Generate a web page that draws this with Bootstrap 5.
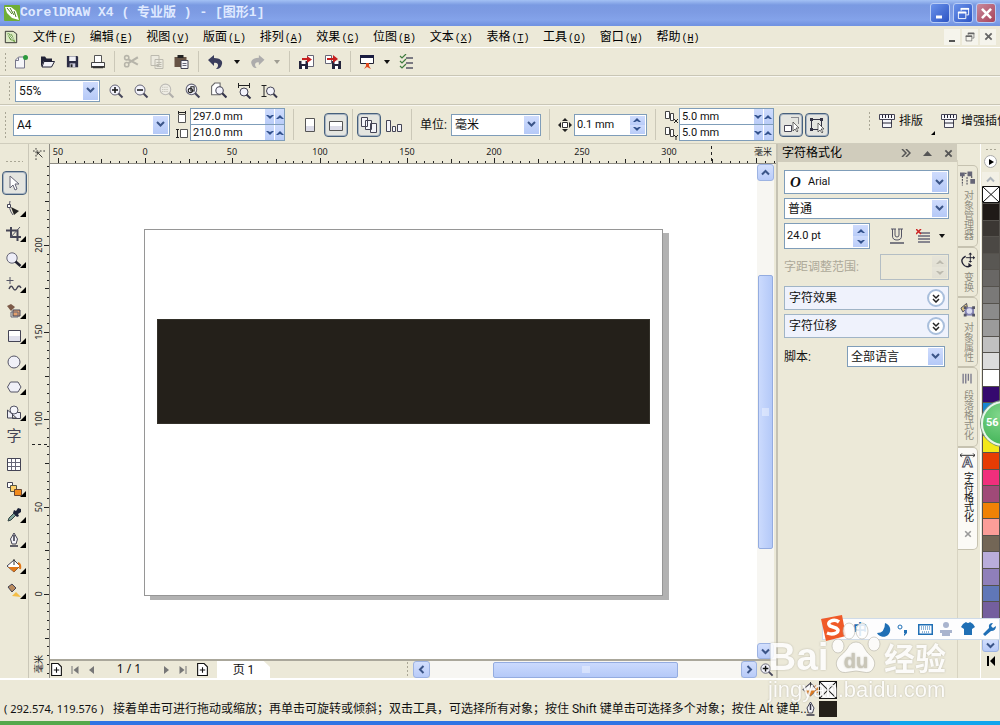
<!DOCTYPE html>
<html lang="zh-CN">
<head>
<meta charset="utf-8">
<meta name="viewport" content="width=device-width, initial-scale=1">
<title>CorelDRAW X4</title>
<link href="https://cdn.jsdelivr.net/npm/bootstrap@5.3.0/dist/css/bootstrap.min.css" rel="stylesheet">
<style>
:root{--face:#ece9d8;--edge:#7f9db9;--blue:#c4d4fb;--ink:#222}
body{font:12px/16px Roboto,"Noto Sans CJK SC",sans-serif;background:var(--face);color:#111;overflow:hidden}
button,input,select{font:inherit;color:inherit}
svg{display:block;flex:none}
.plain-btn{background:none;border:0;padding:0;display:flex;align-items:center;justify-content:center;flex:none}
.titlebar{height:26px;background:linear-gradient(#a3c1f4 0,#7a9ae2 5px,#7d9be3 12px,#84a3ea 20px,#7193e2 25px);color:#dfe9ff}
.titlebar h1{font:bold 13px/26px "Liberation Mono","Noto Sans CJK SC",monospace;white-space:pre}
.win-btn{width:20px;height:20px;border:1px solid #b9cdf5;border-radius:3px;background:linear-gradient(135deg,#6a92ea,#2c54c4)}
.win-btn.quit{background:linear-gradient(135deg,#c98a9c,#a8435a)}
.menubar{height:22px;border-bottom:1px solid #fff}
.menu-list{width:688px}
.menu-list li{flex:1 1 0;padding-left:7px}
.menu-list a{color:#000;text-decoration:none;white-space:nowrap}
.menu-list kbd{font:10px "Liberation Mono",monospace;background:none;color:#000;padding:0 0 0 1px}
.mdi-btn{width:16px;height:16px;background:#f5f4ec}
.bar-std{height:28px;border-bottom:1px solid #c9c6b6;gap:8px}
.bar-std .file-set{gap:10px;margin-left:-2px}
.bar-zoom{height:29px;border-bottom:1px solid #c9c6b6;border-top:1px solid #f8f7f0}
.zoom-set{gap:9px}
.bar-prop{height:38px;border-top:1px solid #f8f7f0}
.grip{width:3px;height:20px;background:radial-gradient(circle,#a9a695 1px,transparent 1px) 0 0/3px 4px;flex:none}
.grip.tall{height:28px}
.grip.flat{width:18px;height:3px;background-size:4px 3px}
.rule-v{width:1px;align-self:stretch;margin:3px 0;background:#cbc8b8;flex:none}
.combo{appearance:none;border:1px solid var(--edge);border-radius:0;height:22px;padding:0 18px 0 3px;line-height:18px;
 background:url("data:image/svg+xml,%3Csvg xmlns='http://www.w3.org/2000/svg' width='9' height='7'%3E%3Cpath d='M1 1l3.500 3.500L8 1' fill='none' stroke='%233b5588' stroke-width='2'/%3E%3C/svg%3E") right 4px center no-repeat,
 linear-gradient(#cfdcfd,#b5c9f7) right 1px center/15px calc(100% - 2px) no-repeat,#fff}
.field{border:1px solid var(--edge);background:#fff;display:flex;align-items:stretch}
.field input{border:0;background:none;padding:0 0 0 2px;min-width:0;width:100%;outline:0;font-size:11px}
.field button{border:0;padding:0;background:linear-gradient(#cfdcfd,#b9ccf8);display:flex;align-items:center;justify-content:center}
.pair .field{height:17px;width:95px}
.pair label+label .field{margin-top:-1px}
.pair .field button{width:10px;border-left:1px solid #fff;flex:none}
.size-set label{gap:2px}
.steps{width:15px;margin:1px;flex:none;display:flex;flex-direction:column}
.steps button{flex:1}
.toggled{border:1px solid #47607c;border-radius:4px;background:#e4e5e0;box-shadow:0 0 0 1px #a9b5c2 inset}
.sq{width:24px;height:24px}
.dd::after{content:"";border:3px solid transparent;border-top:4px solid #111;border-bottom:0}
.dd{width:8px}
.dim{opacity:.35}
.toolbox{width:29px;border-right:1px solid #cac7b8}
.tool-stack{height:432px}
.tool-stack button{width:25px;height:24px}
.tool-glyph{font-size:15px;line-height:15px;color:#445;padding-bottom:4px}
.fly::after{content:"";position:absolute;right:1px;bottom:4px;border:3px solid transparent;border-right-color:#000;border-bottom-color:#000}
.rulers-v{width:21px;border-right:1px solid #8e8c84}
.ruler-h{height:20px;border-bottom:1px solid #8e8c84}
.ruler-corner{height:20px}
.ruler-text{font:9px "Noto Sans","Noto Sans CJK SC",sans-serif;fill:#222}
.canvas{background:#fff}
.paper{width:519px;height:367px;margin:65px 0 0 94px;border:1px solid #969696;box-shadow:6px 4px 0 0 #b2b2b2;padding:89px 12px 0}
.paper>div{height:105px;background:#24201a;border:1px solid #333029}
.scroll-v{width:17px;margin-right:2px;background:#f7f6f2}
.scroll-btn{background:linear-gradient(#d3dffd,#b8cbf8);border:1px solid #9db3e2;border-radius:3px}
.thumb-v{height:274px;margin:94px 1px 0;background:linear-gradient(90deg,#cbdafd,#b4c9f8);border:1px solid #94ace0;border-radius:2px}
.thumb-h{width:185px;height:16px;background:linear-gradient(#cbdafd,#b4c9f8);border:1px solid #94ace0;border-radius:2px}
.pagebar{height:19px;border-top:2px solid #aaa79b}
.page-count{width:60px;font-family:"Noto Sans",sans-serif}
.page-tab{width:53px;background:#fff;clip-path:polygon(0 0,88% 0,100% 35%,100% 100%,0 100%)}
.docker{width:181px;border-left:2px solid #c5c2b3}
.docker-head{height:18px;background:#d0ccbc}
.docker-body{padding:8px 8px 0 6px}
.roll{height:24px;border:1px solid #a0b4c6;background:#eff2fc;padding:0 3px 0 4px}
.roll i{width:18px;height:18px;border:2px solid #a9bfdc;border-radius:50%;background:#fff;display:flex;align-items:center;justify-content:center}
.font-mark{left:6px;top:4px;font:italic bold 15px/16px "Liberation Serif",serif}
.tab-col{width:23px;border-left:1px solid #d8d4c2;padding-top:5px}
.side-tab{width:20px;border:1px solid #c6c2b0;border-left:0;border-radius:0 5px 5px 0;color:#8f8c7f;font-size:11px;line-height:14px;padding:4px 0;background:none;display:flex;flex-direction:column;align-items:center;gap:4px}
.side-tab span{writing-mode:vertical-rl;white-space:nowrap;font-size:10px}
.side-tab.active{background:#fbfaf6;color:#111}
.palette{width:20px;border-left:1px solid #fff;padding:4px 1px 0}
.swatches{height:432px;width:18px}
.swatches span{flex:1 1 0;border:1px solid #55524d;border-bottom-width:0}
.status{height:43px;border-top:2px solid #fff}
.coords{width:113px;font:11px/16px "Noto Sans",sans-serif}
.hint{width:689px}
.taskbar{height:4px;background:linear-gradient(90deg,#55a84c 0 9%,#2f74e4 9% 89%,#12a5ee 89%)}
.clip{position:absolute;inset:0;overflow:hidden;pointer-events:none}
.ball{position:absolute;right:-26px;top:401px;width:45px;height:45px;border-radius:50%;border:2px solid #e8f6ea;background:radial-gradient(circle at 40% 30%,#7fd68a,#35ac4d);color:#fff;font-weight:700;font-size:11px;line-height:40px;padding-left:3px;box-shadow:0 0 0 1px #7b9a80}
.ime{position:absolute;right:0;top:618px;width:178px;height:22px;background:#fdfdfe;border:1px solid #cfdbe8;padding-left:29px}
.sogou{position:absolute;left:-4px;top:-5px}
.wm{position:absolute;right:54px;top:634px;width:178px;color:#fff;opacity:.85;text-shadow:0 0 2px #aaa79a}
.wm-name{font:bold 39px/46px "Liberation Sans",sans-serif}
.wm-cn{font:bold 31px/46px "Noto Sans CJK SC",sans-serif}
.wm-url{font:22px/20px "Liberation Sans",sans-serif}
</style>
</head>
<body class="vh-100 d-flex flex-column position-relative">

<svg width="0" height="0" class="position-absolute" aria-hidden="true">
 <defs>
 <symbol id="logo" viewBox="0 0 16 16"><rect width="16" height="16" rx="1" fill="#6fae35"/><path d="M1 2l6 0 5 4 3 9-7-2-5-5z" fill="#fff"/><path d="M3 3l5 6M6 3l4 7M10 6l2 6" stroke="#4c7f22" fill="none"/></symbol>
 <symbol id="doc" viewBox="0 0 16 16"><path d="M1.500 1.500h9l4 3v10h-13z" fill="#dce9c4" stroke="#222"/><path d="M3 3l6 2 4 9-6-3z" fill="#5d9431"/><path d="M4 4l6 8M7 5l4 6" stroke="#fff"/></symbol>
 <symbol id="new" viewBox="0 0 16 16"><path d="M2.500 6l3-3h6v11h-9z" fill="#f5f5f8" stroke="#77778a"/><path d="M2.500 6.500h3v-3" fill="none" stroke="#77778a"/><circle cx="12.500" cy="3.500" r="2.500" fill="#2d9a3c"/></symbol>
 <symbol id="open" viewBox="0 0 16 16"><path d="M2 13V2.500h4l1.500 2H13V7H5z" fill="#222336"/><path d="M5 7.500h10.500l-3 5.500H3z" fill="#f3f3f8" stroke="#222336"/></symbol>
 <symbol id="save" viewBox="0 0 16 16"><path d="M2 2h11l1 1v11H2z" fill="#2b2c44"/><path d="M4.500 2.500h7v5h-7z" fill="#f1f1f6"/><path d="M5 10h6v4H5z" fill="#ccd"/><path d="M6 11h2v3H6z" fill="#222"/></symbol>
 <symbol id="print" viewBox="0 0 16 16"><path d="M4.500 8V1.500h7V8" fill="#fff" stroke="#555"/><path d="M1.500 8.500h13v4h-13z" fill="#fafafc" stroke="#444"/><path d="M3 13.500h10M1 13h14" stroke="#333" stroke-width="1.500"/></symbol>
 <symbol id="cut" viewBox="0 0 16 16"><path d="M14 4L5 9.500M14 11L5 6" stroke="#555" stroke-width="2"/><circle cx="3.500" cy="4.500" r="2" fill="none" stroke="#555" stroke-width="1.500"/><circle cx="3.500" cy="11" r="2" fill="none" stroke="#555" stroke-width="1.500"/></symbol>
 <symbol id="copy" viewBox="0 0 16 16"><path d="M2.500 1.500h8v10h-8zM6.500 5.500h8v9h-8z" fill="#eee" stroke="#666"/><path d="M8 8.500h5M8 10.500h5M8 12.500h5" stroke="#666"/></symbol>
 <symbol id="paste" viewBox="0 0 16 16"><path d="M1 3h12v10H1z" fill="#665344"/><path d="M4 1h6v3H4z" fill="#222"/><path d="M7.500 6.500h7v8h-7z" fill="#f5f5fa" stroke="#445"/><path d="M9 9.500h4M9 11.500h4" stroke="#667"/></symbol>
 <symbol id="undo" viewBox="0 0 16 16"><path d="M0 6l6-5v3c6 0 9 3 8 6-1 4-3 5-6 5 3-2 3-7-2-6v3z" fill="#3a3d5c"/></symbol>
 <symbol id="import" viewBox="0 0 18 16"><path d="M9.500 1.500h6v11h-6z" fill="#fff" stroke="#667"/><path d="M1 7h9v8H1z" fill="#24253c"/><path d="M3.500 7h4v3h-4zM4 12h3v3H4z" fill="#fff"/><path d="M4 4h5V2l5 3.500-5 3.500V6H4z" fill="#c61f1f"/></symbol>
 <symbol id="export" viewBox="0 0 18 16"><path d="M1.500 1.500h6v8h-6z" fill="#fff" stroke="#667"/><path d="M8 7h9v8H8z" fill="#24253c"/><path d="M10.500 7h4v3h-4zM11 12h3v3h-3z" fill="#fff"/><path d="M3 4h6V1l5 4-5 4V6H3z" fill="#c61f1f"/></symbol>
 <symbol id="launch" viewBox="0 0 16 16"><path d="M1.500 1.500h13v8h-13z" fill="#fff" stroke="#223"/><path d="M1 1h14v3H1z" fill="#1b1d40"/><path d="M7 9h3v3l2 3-4-2-3 2 2-3z" fill="#e0481d"/></symbol>
 <symbol id="checks" viewBox="0 0 16 16"><path d="M7 4h7M7 9h7M7 14h7" stroke="#556" stroke-width="1.500"/><path d="M1 2l2 2 4-4M1 7l2 2 4-4M1 12l2 2 4-4" fill="none" stroke="#3f7c3f" stroke-width="1.200"/></symbol>
 <symbol id="lens" viewBox="0 0 16 16"><circle cx="7" cy="7" r="5" fill="#f3f3fb" stroke="#666678"/><path d="M10.500 10.500l4 4" stroke="#45455a" stroke-width="2"/></symbol>
 <symbol id="zin" viewBox="0 0 16 16"><use href="#lens"/><path d="M4 7h6M7 4v6" stroke="#111" stroke-width="1.500"/></symbol>
 <symbol id="zout" viewBox="0 0 16 16"><use href="#lens"/><path d="M4 7h6" stroke="#111" stroke-width="1.500"/></symbol>
 <symbol id="zsel" viewBox="0 0 16 16"><use href="#lens"/><path d="M4 5h6M4 7h6M4 9h6" stroke="#666" stroke-dasharray="1 1"/></symbol>
 <symbol id="zall" viewBox="0 0 16 16"><use href="#lens"/><circle cx="6" cy="8" r="2" fill="none" stroke="#222"/><path d="M6.500 4.500h3v4h-3z" fill="none" stroke="#222"/></symbol>
 <symbol id="zpage" viewBox="0 0 16 16"><path d="M1.500 12V4l3-3h5v11z" fill="#fff" stroke="#666"/><circle cx="9" cy="8" r="3.500" fill="#f3f3fb" stroke="#445"/><path d="M11.500 10.500l4 4" stroke="#35354a" stroke-width="2"/></symbol>
 <symbol id="zwid" viewBox="0 0 16 16"><path d="M2 2.500h12M2.500 0v5M13.500 0v5" stroke="#222"/><circle cx="8" cy="9" r="4" fill="#f3f3fb" stroke="#445"/><path d="M10.500 11.500l4 4" stroke="#35354a" stroke-width="2"/></symbol>
 <symbol id="zhei" viewBox="0 0 16 16"><path d="M2.500 2v12M0 2.500h5M0 13.500h5" stroke="#222"/><circle cx="9" cy="8" r="4" fill="#f3f3fb" stroke="#445"/><path d="M12 11l3.500 3.500" stroke="#35354a" stroke-width="2"/></symbol>
 <symbol id="pw" viewBox="0 0 12 12"><path d="M2.500 3.500h7v8h-7z" fill="#fff" stroke="#555"/><path d="M2 1.500h8M2.500 0v3M9.500 0v3" stroke="#222"/></symbol>
 <symbol id="ph" viewBox="0 0 12 12"><path d="M4.500 2.500h7v8h-7z" fill="#fff" stroke="#555"/><path d="M1.500 2v9M0 2.500h3M0 10.500h3" stroke="#222"/></symbol>
 <symbol id="tall" viewBox="0 0 16 16"><path d="M3.500 1.500h9v13h-9z" fill="#fff" stroke="#555"/><path d="M4 9h8v5H4z" fill="#dcdce8"/></symbol>
 <symbol id="wide" viewBox="0 0 16 16"><path d="M1.500 4.500h13v9h-13z" fill="#fff" stroke="#555"/><path d="M2 9h12v4H2z" fill="#dcdce8"/></symbol>
 <symbol id="pages" viewBox="0 0 18 16"><path d="M1.500.5h6v9h-6zM5.500 3.500h6v9h-6zM10.500 6.500h6v9h-6z" fill="#f5f5fa" stroke="#445"/></symbol>
 <symbol id="bars" viewBox="0 0 18 16"><path d="M1.500 3.500h4v11h-4zM7.500 9.500h3v5h-3zM12.500 7.500h4v7h-4z" fill="#f5f5fa" stroke="#445"/></symbol>
 <symbol id="nudge" viewBox="0 0 14 14"><path d="M4.500 4.500h5v5h-5z" fill="#fff" stroke="#333"/><path d="M7 0l3 3H4zM7 14l3-3H4zM0 7l3-3v6zM14 7l-3-3v6z" fill="#222"/></symbol>
 <symbol id="dup" viewBox="0 0 14 14"><path d="M1.500 1.500h4v7h-4zM6.500 3.500h3v7h-3z" fill="#fff" stroke="#444"/></symbol>
 <symbol id="treat" viewBox="0 0 16 16"><path d="M8.500.5h7v7" fill="none" stroke="#334" stroke-dasharray="1 1"/><path d="M1.500 8.500h7v6h-7z" fill="#fff" stroke="#445"/><path d="M10 5v9l2-2 2 3 1-1-2-3h3z" fill="#fff" stroke="#333" stroke-width=".7"/></symbol>
 <symbol id="trans" viewBox="0 0 16 16"><path d="M2.500 2.500h10v10h-10z" fill="none" stroke="#334"/><path d="M1 1h3v3H1zM11 1h3v3h-3zM1 11h3v3H1z" fill="#334"/><path d="M9 6v9l2-2 2 3 1-1-2-3h3z" fill="#fff" stroke="#333" stroke-width=".7"/></symbol>
 <symbol id="plate" viewBox="0 0 16 16"><path d="M.5 1.500h15v5H.5zM3.500 6.500h9v8h-9z" fill="#f7f7fb" stroke="#445"/><path d="M3.500 2v3M6.500 2v3M9.500 2v3M12.500 2v3M3 10h10" stroke="#223"/></symbol>
 <symbol id="t-pick" viewBox="0 0 16 16"><path d="M4 1v12l3-3 2 5 2-1-2-5h4z" fill="#fff" stroke="#667"/></symbol>
 <symbol id="t-shape" viewBox="0 0 16 16"><path d="M4 0Q2 8 7 14" fill="none" stroke="#556"/><path d="M1.500 3.500h3v3h-3z" fill="#fff" stroke="#445"/><path d="M5 6l8 4-5 4z" fill="#222"/></symbol>
 <symbol id="t-crop" viewBox="0 0 16 16"><path d="M5 1v10h10M0 4.500h11.500V15" fill="none" stroke="#445" stroke-width="2"/><path d="M4 12L14 1" stroke="#556"/></symbol>
 <symbol id="t-zoom" viewBox="0 0 16 16"><circle cx="6" cy="6" r="5.200" fill="#eeeef8" stroke="#667"/><path d="M9.500 9.500l5 4.500" stroke="#223" stroke-width="2.500"/></symbol>
 <symbol id="t-free" viewBox="0 0 16 16"><path d="M4 0v7M.5 3.500h7" stroke="#556"/><path d="M3 12q2-5 4-1t4 0 4 0" fill="none" stroke="#445" stroke-width="1.500"/></symbol>
 <symbol id="t-smart" viewBox="0 0 16 16"><path d="M1 3l4-2 4 3-4 4z" fill="#7c5a48"/><path d="M7 7h7v6H7z" fill="#e3a06c" stroke="#445"/><path d="M5 9h7v5H5z" fill="none" stroke="#667"/></symbol>
 <symbol id="t-rect" viewBox="0 0 16 16"><path d="M2.500 2.500h12v11h-12z" fill="#fff" stroke="#445"/><path d="M3 8h11v5H3z" fill="#e0e0ec"/></symbol>
 <symbol id="t-ell" viewBox="0 0 16 16"><circle cx="8" cy="8" r="6" fill="#f0f0f8" stroke="#556"/></symbol>
 <symbol id="t-poly" viewBox="0 0 16 16"><path d="M4.500 3h7.500l3 5-3 5H4.500l-3-5z" fill="#f0f0f8" stroke="#556"/></symbol>
 <symbol id="t-basic" viewBox="0 0 16 16"><path d="M1.500 5v8l9 0zM6.500 7.500h8v6h-8z" fill="#f0f0f8" stroke="#445"/><circle cx="8" cy="5" r="4" fill="#f5f5fa" stroke="#556"/></symbol>
 <symbol id="t-table" viewBox="0 0 16 16"><path d="M1.500 2.500h13v12h-13z" fill="#fff" stroke="#445"/><path d="M2 6.500h12M2 10.500h12M5.500 3v11M9.500 3v11" stroke="#667"/></symbol>
 <symbol id="t-blend" viewBox="0 0 16 16"><path d="M1.500 1.500h5v5h-5z" fill="#fff" stroke="#445"/><path d="M4.500 4.500h6v6h-6z" fill="#ffd06a" stroke="#554"/><path d="M8.500 8.500h7v6h-7z" fill="#f28a1c" stroke="#643"/></symbol>
 <symbol id="t-drop" viewBox="0 0 16 16"><path d="M2 14l1-3 6-6 2 2-6 6z" fill="#7fa39a" stroke="#344"/><path d="M8 3l2 1 2-3 3 1v3l-3 2 1 2-2 1-4-4z" fill="#1c2338"/></symbol>
 <symbol id="t-pen" viewBox="0 0 16 16"><path d="M8 1l3.500 6L10 12H6L4.500 7z" fill="#f5f5fa" stroke="#445"/><path d="M8 3v6M4 14h8" stroke="#334" stroke-width="1.500"/></symbol>
 <symbol id="t-fill" viewBox="0 0 16 16"><path d="M1 8l7-6 6 6-6 6z" fill="#fff" stroke="#445"/><path d="M2 9h11l-5 5z" fill="#e27818"/><path d="M12 5q3 1 2 6" fill="none" stroke="#e27818" stroke-width="2"/><path d="M8 1v6" stroke="#333"/></symbol>
 <symbol id="t-ifill" viewBox="0 0 16 16"><path d="M2 4l4-3 4 4-4 4z" fill="#b98a5e" stroke="#445"/><path d="M6 13l4-4 5 5z" fill="#f4bd45"/></symbol>
 <symbol id="origin" viewBox="0 0 14 14"><path d="M3.500 0v14M0 3.500h14" stroke="#222" stroke-dasharray="2 2"/><path d="M5 5l6 6M5 8V5h3" stroke="#222" fill="none"/></symbol>
 <symbol id="up" viewBox="0 0 9 7"><path d="M1 5.500L4.500 2 8 5.500" fill="none" stroke="#3b5588" stroke-width="2"/></symbol>
 <symbol id="down" viewBox="0 0 9 7"><path d="M1 1.500L4.500 5 8 1.500" fill="none" stroke="#3b5588" stroke-width="2"/></symbol>
 <symbol id="tu" viewBox="0 0 8 6"><path d="M0 5l4-4 4 4-2 0-2-1-2 1z" fill="#31508c"/></symbol>
 <symbol id="td" viewBox="0 0 8 6"><path d="M0 1l4 4 4-4-2 0-2 1-2-1z" fill="#31508c"/></symbol>
 <symbol id="left" viewBox="0 0 7 9"><path d="M5.500 1L2 4.500 5.500 8" fill="none" stroke="#3b5588" stroke-width="2"/></symbol>
 <symbol id="right" viewBox="0 0 7 9"><path d="M1.500 1L5 4.500 1.500 8" fill="none" stroke="#3b5588" stroke-width="2"/></symbol>
 <symbol id="addpg" viewBox="0 0 12 12"><path d="M1.500.5h6l3 3v8h-9z" fill="#fff" stroke="#111"/><path d="M6 4v5M3.500 6.500h5" stroke="#111"/></symbol>
 <symbol id="rw" viewBox="0 0 8 10"><path d="M7 1L2 5l5 4z" fill="#777"/></symbol>
 <symbol id="rwall" viewBox="0 0 8 10"><path d="M8 1L3 5l5 4zM1 1h1v8H1z" fill="#777"/></symbol>
 <symbol id="x" viewBox="0 0 10 10"><path d="M1.500 1.500l7 7m0-7l-7 7" stroke="currentColor" stroke-width="2"/></symbol>
 <symbol id="none" viewBox="0 0 18 17" preserveAspectRatio="none"><path d="M.5.500h17v16H.500z" fill="#fff" stroke="#111"/><path d="M1 1l16 15M17 1L1 16" stroke="#111"/></symbol>
 <symbol id="restore" viewBox="0 0 14 14"><path d="M4.500 4V1.500h8v7H10M1.500 5.500h8v7h-8z" fill="none" stroke="currentColor"/><path d="M4 2h9M1 6h9" stroke="currentColor" stroke-width="2"/></symbol>
 <symbol id="s-tree" viewBox="0 0 16 16"><path d="M0 2h5v4H0zM8 1h5v5H8zM11 9h5v5h-5z" fill="#667"/><path d="M5 3h3M2.500 6v10M7.500 7v9M12.500 6v3" stroke="#334" stroke-dasharray="2 1"/></symbol>
 <symbol id="s-turn" viewBox="0 0 16 16"><path d="M6 4Q0 7 3 12t8 2" fill="none" stroke="#223" stroke-width="1.500"/><path d="M11 1v9M6.500 5.500h9" stroke="#223"/><path d="M11 0l2 2H9zM11 11l2-2H9zM16 5.500l-2-2v4zM9 16l4-2-4-3z" fill="#223"/></symbol>
 <symbol id="s-prop" viewBox="0 0 16 16"><path d="M1 6l6-5 1 5-5 4z" fill="#e3ca83" stroke="#445"/><path d="M5 5h10v9H5z" fill="#8585b4"/><circle cx="10" cy="9" r="3" fill="#dcdcf0"/><path d="M4 4h3v3H4zM13 4h3v3h-3zM4 12h3v3H4zM13 12h3v3h-3z" fill="#556"/></symbol>
 <symbol id="s-para" viewBox="0 0 16 16"><path d="M3 2v11M6 2v11M9 2v8M12 2v11" stroke="#77778a" stroke-width="1.500"/></symbol>
 <symbol id="s-char" viewBox="0 0 16 16"><path d="M0 3h16M2 1L0 3l2 2M14 1l2 2-2 2" stroke="#222" fill="none"/><text x="8" y="15" text-anchor="middle" font-family="Liberation Sans, sans-serif" font-size="16" font-weight="bold" fill="#fff" stroke="#445">A</text></symbol>
 </defs>
</svg>

<header class="titlebar d-flex align-items-center flex-shrink-0 px-1">
 <svg width="16" height="16"><use href="#logo"/></svg>
 <h1 class="m-0 flex-grow-1">CorelDRAW X4 ( 专业版 ) - [图形1]</h1>
 <div class="d-flex" style="gap:3px">
  <button class="plain-btn win-btn" aria-label="最小化"><svg width="14" height="14"><path d="M3 11h6" stroke="#fff" stroke-width="3"/></svg></button>
  <button class="plain-btn win-btn text-white" aria-label="还原"><svg width="13" height="13"><use href="#restore"/></svg></button>
  <button class="plain-btn win-btn quit text-white" aria-label="关闭"><svg width="13" height="13"><use href="#x"/></svg></button>
 </div>
</header>

<nav class="menubar d-flex align-items-center flex-shrink-0 px-1">
 <svg width="14" height="16"><use href="#doc"/></svg>
 <ul class="menu-list list-unstyled d-flex m-0 ps-2">
  <li><a href="#">文件<kbd>(<u>F</u>)</kbd></a></li><li><a href="#">编辑<kbd>(<u>E</u>)</kbd></a></li><li><a href="#">视图<kbd>(<u>V</u>)</kbd></a></li><li><a href="#">版面<kbd>(<u>L</u>)</kbd></a></li><li><a href="#">排列<kbd>(<u>A</u>)</kbd></a></li><li><a href="#">效果<kbd>(<u>C</u>)</kbd></a></li><li><a href="#">位图<kbd>(<u>B</u>)</kbd></a></li><li><a href="#">文本<kbd>(<u>X</u>)</kbd></a></li><li><a href="#">表格<kbd>(<u>T</u>)</kbd></a></li><li><a href="#">工具<kbd>(<u>O</u>)</kbd></a></li><li><a href="#">窗口<kbd>(<u>W</u>)</kbd></a></li><li><a href="#">帮助<kbd>(<u>H</u>)</kbd></a></li>
 </ul>
 <div class="d-flex ms-auto" style="gap:2px;color:#666">
  <button class="plain-btn mdi-btn" aria-label="最小化文档"><svg width="12" height="12"><path d="M3 10h6" stroke="#555" stroke-width="2"/></svg></button>
  <button class="plain-btn mdi-btn" aria-label="还原文档"><svg width="10" height="10"><use href="#restore"/></svg></button>
  <button class="plain-btn mdi-btn" aria-label="关闭文档"><svg width="9" height="9"><use href="#x"/></svg></button>
 </div>
</nav>

<div class="bar-std d-flex align-items-center flex-shrink-0 ps-1" role="toolbar">
 <span class="grip"></span>
 <div class="file-set d-flex">
  <button class="plain-btn" aria-label="新建"><svg width="16" height="16"><use href="#new"/></svg></button>
  <button class="plain-btn" aria-label="打开"><svg width="16" height="16"><use href="#open"/></svg></button>
  <button class="plain-btn" aria-label="保存"><svg width="15" height="15"><use href="#save"/></svg></button>
  <button class="plain-btn" aria-label="打印"><svg width="16" height="16"><use href="#print"/></svg></button>
 </div>
 <span class="rule-v"></span>
 <button class="plain-btn dim" aria-label="剪切"><svg width="17" height="17"><use href="#cut"/></svg></button>
 <button class="plain-btn dim" aria-label="复制"><svg width="17" height="16"><use href="#copy"/></svg></button>
 <button class="plain-btn" aria-label="粘贴"><svg width="17" height="16"><use href="#paste"/></svg></button>
 <span class="rule-v"></span>
 <button class="plain-btn" aria-label="撤消"><svg width="18" height="16" viewBox="0 0 16 16"><use href="#undo"/></svg></button>
 <button class="plain-btn dd" aria-label="撤消列表"></button>
 <button class="plain-btn dim" aria-label="重做"><svg width="16" height="15" viewBox="0 0 16 16"><path d="M16 6l-6-5v3C4 4 1 7 2 10c1 4 3 5 6 5-3-2-3-7 2-6v3z" fill="#3a3d5c"/></svg></button>
 <button class="plain-btn dd dim" aria-label="重做列表"></button>
 <span class="rule-v"></span>
 <button class="plain-btn" aria-label="导入"><svg width="18" height="16"><use href="#import"/></svg></button>
 <button class="plain-btn" aria-label="导出"><svg width="18" height="16"><use href="#export"/></svg></button>
 <span class="rule-v"></span>
 <button class="plain-btn" aria-label="应用程序启动器"><svg width="16" height="16"><use href="#launch"/></svg></button>
 <button class="plain-btn dd" aria-label="启动器列表"></button>
 <button class="plain-btn" aria-label="选项"><svg width="16" height="16"><use href="#checks"/></svg></button>
</div>

<div class="bar-zoom d-flex align-items-center flex-shrink-0 ps-1" role="toolbar">
 <span class="grip ms-1"></span>
 <select class="combo ms-1" style="width:85px" aria-label="缩放级别"><option>55%</option></select>
 <div class="zoom-set d-flex ps-2">
  <button class="plain-btn" aria-label="放大"><svg width="16" height="16"><use href="#zin"/></svg></button>
  <button class="plain-btn" aria-label="缩小"><svg width="16" height="16"><use href="#zout"/></svg></button>
  <button class="plain-btn dim" aria-label="缩放选定范围"><svg width="17" height="17"><use href="#zsel"/></svg></button>
  <button class="plain-btn" aria-label="缩放全部对象"><svg width="17" height="17"><use href="#zall"/></svg></button>
  <button class="plain-btn" aria-label="显示页面"><svg width="17" height="17"><use href="#zpage"/></svg></button>
  <button class="plain-btn" aria-label="按页宽显示"><svg width="16" height="16"><use href="#zwid"/></svg></button>
  <button class="plain-btn" aria-label="按页高显示"><svg width="17" height="16"><use href="#zhei"/></svg></button>
 </div>
</div>

<div class="bar-prop d-flex align-items-center flex-shrink-0 ps-1 overflow-hidden" role="toolbar">
 <span class="grip tall me-1"></span>
 <select class="combo flex-shrink-0" style="width:157px;margin-left:2px" aria-label="纸张类型"><option>A4</option></select>
 <div class="pair size-set flex-shrink-0" style="margin-left:6px">
  <label class="d-flex align-items-center"><svg width="12" height="12"><use href="#pw"/></svg><span class="field"><input value="297.0 mm" aria-label="宽度"><button aria-label="减"><svg width="8" height="6"><use href="#td"/></svg></button><button aria-label="加"><svg width="8" height="6"><use href="#tu"/></svg></button></span></label>
  <label class="d-flex align-items-center"><svg width="12" height="12"><use href="#ph"/></svg><span class="field"><input value="210.0 mm" aria-label="高度"><button aria-label="减"><svg width="8" height="6"><use href="#td"/></svg></button><button aria-label="加"><svg width="8" height="6"><use href="#tu"/></svg></button></span></label>
 </div>
 <span class="rule-v ms-2"></span>
 <button class="plain-btn ms-2" style="width:16px" aria-label="纵向"><svg width="16" height="16"><use href="#tall"/></svg></button>
 <button class="plain-btn toggled sq" style="margin-left:6px" aria-label="横向"><svg width="16" height="16"><use href="#wide"/></svg></button>
 <span class="rule-v mx-1"></span>
 <button class="plain-btn toggled sq" aria-label="应用到全部页面"><svg width="18" height="16"><use href="#pages"/></svg></button>
 <button class="plain-btn ms-1" aria-label="应用到当前页"><svg width="18" height="18"><use href="#bars"/></svg></button>
 <span class="rule-v mx-2"></span>
 <label class="text-nowrap" for="unit">单位:</label>
 <select id="unit" class="combo ms-1 flex-shrink-0" style="width:90px"><option>毫米</option></select>
 <span class="rule-v mx-2"></span>
 <label class="d-flex align-items-center flex-shrink-0"><svg width="14" height="14"><use href="#nudge"/></svg><span class="field" style="width:73px;height:22px;margin-left:2px"><input value="0.1 mm" aria-label="微调偏移"><span class="steps"><button aria-label="加"><svg width="8" height="6"><use href="#tu"/></svg></button><button aria-label="减"><svg width="8" height="6"><use href="#td"/></svg></button></span></span></label>
 <span class="rule-v mx-2"></span>
 <div class="pair flex-shrink-0">
  <label class="d-flex align-items-center"><svg width="15" height="14" viewBox="0 0 15 14"><use href="#dup" width="14" height="14"/><path d="M10 9l4 4m0-4l-4 4" stroke="#222"/></svg><span class="field"><input value="5.0 mm" aria-label="再制距离 X"><button aria-label="减"><svg width="8" height="6"><use href="#td"/></svg></button><button aria-label="加"><svg width="8" height="6"><use href="#tu"/></svg></button></span></label>
  <label class="d-flex align-items-center"><svg width="15" height="14" viewBox="0 0 15 14"><use href="#dup" width="14" height="14"/><path d="M10 9l2 2 2-2m-2 2v3" fill="none" stroke="#222"/></svg><span class="field"><input value="5.0 mm" aria-label="再制距离 Y"><button aria-label="减"><svg width="8" height="6"><use href="#td"/></svg></button><button aria-label="加"><svg width="8" height="6"><use href="#tu"/></svg></button></span></label>
 </div>
 <button class="plain-btn toggled sq" style="margin:0 2px 0 5px" aria-label="视为已填充"><svg width="16" height="16"><use href="#treat"/></svg></button>
 <button class="plain-btn toggled sq" aria-label="边框"><svg width="16" height="16"><use href="#trans"/></svg></button>
 <div class="d-flex align-items-center ms-auto mb-2 flex-shrink-0" style="width:132px">
  <span class="grip me-2"></span>
  <button class="plain-btn gap-1 text-nowrap"><svg width="16" height="16"><use href="#plate"/></svg>排版</button>
  <span class="align-self-end ps-1"><svg width="14" height="4" style="margin-bottom:-6px"><path d="M8 4V0L4 4z"/></svg></span>
  <button class="plain-btn gap-1 text-nowrap"><svg width="16" height="16"><use href="#plate"/></svg>增强插件</button>
 </div>
</div>

<main class="d-flex flex-grow-1 border-top" style="min-height:0;border-color:#d0cdbd!important">
 <aside class="toolbox flex-shrink-0 d-flex flex-column align-items-center" role="toolbar">
  <span class="grip flat mt-3 mb-2"></span>
  <div id="tools" class="tool-stack d-flex flex-column justify-content-between"></div>
 </aside>

 <div class="rulers-v flex-shrink-0 d-flex flex-column">
  <div class="ruler-corner d-flex justify-content-end align-items-center pe-1"><svg width="12" height="12"><use href="#origin"/></svg></div>
  <svg id="rulerV" class="flex-grow-1" width="20" style="min-height:0"></svg>
 </div>

 <section class="d-flex flex-column flex-grow-1" style="min-width:0">
  <svg id="rulerH" class="ruler-h w-100"></svg>
  <div class="d-flex flex-grow-1" style="min-height:0">
   <div class="canvas flex-grow-1 overflow-hidden" style="min-width:0"><div class="paper"><div></div></div></div>
   <div class="scroll-v d-flex flex-column flex-shrink-0">
    <button class="plain-btn scroll-btn" style="height:17px" aria-label="向上滚动"><svg width="9" height="7"><use href="#up"/></svg></button>
    <div class="thumb-v d-flex align-items-center justify-content-center"><svg width="7" height="8"><path d="M0 1h7M0 3h7M0 5h7M0 7h7" stroke="#eef3ff"/></svg></div>
    <button class="plain-btn scroll-btn mt-auto" style="height:16px" aria-label="向下滚动"><svg width="9" height="7"><use href="#down"/></svg></button>
   </div>
  </div>
  <div class="pagebar d-flex align-items-stretch flex-shrink-0">
   <button class="plain-btn" style="margin-right:7px" aria-label="前添加页"><svg width="13" height="13"><use href="#addpg"/></svg></button>
   <button class="plain-btn me-2" aria-label="首页"><svg width="9" height="10"><use href="#rwall"/></svg></button>
   <button class="plain-btn" aria-label="上一页"><svg width="8" height="10"><use href="#rw"/></svg></button>
   <span class="page-count text-center ms-2 pe-2">1 / 1</span>
   <button class="plain-btn me-2" aria-label="下一页"><svg width="8" height="10" style="rotate:180deg"><use href="#rw"/></svg></button>
   <button class="plain-btn me-2" aria-label="末页"><svg width="9" height="10" style="rotate:180deg"><use href="#rwall"/></svg></button>
   <button class="plain-btn me-1" aria-label="后添加页"><svg width="13" height="13"><use href="#addpg"/></svg></button>
   <button class="page-tab border-0 p-0 flex-shrink-0 ms-1">页 1</button>
   <span class="flex-grow-1"></span>
   <span class="grip mx-1" style="height:16px"></span>
   <button class="plain-btn scroll-btn" style="width:17px" aria-label="向左滚动"><svg width="7" height="9"><use href="#left"/></svg></button>
   <div class="d-flex justify-content-center align-items-center" style="width:311px;background:#f7f6f2"><div class="thumb-h d-flex align-items-center justify-content-center"><svg width="8" height="7"><path d="M1 0v7M3 0v7M5 0v7M7 0v7" stroke="#eef3ff"/></svg></div></div>
   <button class="plain-btn scroll-btn" style="width:16px" aria-label="向右滚动"><svg width="7" height="9"><use href="#right"/></svg></button>
   <button class="plain-btn" style="margin:0 2px" aria-label="导航器"><svg width="15" height="15"><use href="#zin"/></svg></button>
  </div>
 </section>

 <aside class="docker flex-shrink-0">
  <div class="docker-head d-flex align-items-center px-1" style="color:#555">
   <strong class="fw-normal text-black flex-grow-1">字符格式化</strong>
   <button class="plain-btn me-2" aria-label="折叠"><svg width="10" height="8"><path d="M1 0l4 4-4 4M5 0l4 4-4 4" fill="none" stroke="#555" stroke-width="1.500"/></svg></button>
   <button class="plain-btn mx-1" aria-label="卷起"><svg width="9" height="5"><path d="M0 5l4.500-5L9 5z" fill="#555"/></svg></button>
   <button class="plain-btn ms-2" aria-label="关闭泊坞窗"><svg width="9" height="9"><use href="#x"/></svg></button>
  </div>
  <form class="docker-body d-flex flex-column gap-1">
   <div class="position-relative"><select class="combo w-100" style="height:24px;padding-left:23px;font-size:11px" aria-label="字体"><option>Arial</option></select><span class="font-mark position-absolute">O</span></div>
   <select class="combo w-100" style="height:21px" aria-label="字体样式"><option>普通</option></select>
   <div class="d-flex align-items-center">
    <span class="field" style="width:86px;height:26px"><input value="24.0 pt" aria-label="字体大小"><span class="steps"><button type="button" aria-label="加"><svg width="8" height="6"><use href="#tu"/></svg></button><button type="button" aria-label="减"><svg width="8" height="6"><use href="#td"/></svg></button></span></span>
    <button type="button" class="plain-btn ms-3 ps-1" aria-label="下划线"><svg width="14" height="16"><path d="M2.500 1v7q0 4 4.500 4t4.500-4V1M5 1v6q0 2 2 2t2-2V1M1 1h5M8 1h5" fill="none" stroke="#556"/><path d="M0 15h14" stroke="#556" stroke-width="1.500"/></svg></button>
    <button type="button" class="plain-btn ms-2 ps-1" aria-label="对齐"><svg width="14" height="14"><path d="M4 4h10M2 7h12M2 10h12M2 13h12" stroke="#667" stroke-width="1.500"/><path d="M0 0l5 5M5 0L0 5" stroke="#c22" stroke-width="1.500"/></svg></button>
    <button type="button" class="plain-btn dd ms-2" aria-label="对齐列表"></button>
   </div>
   <div class="d-flex align-items-center justify-content-between" style="color:#aca899;margin-top:1px"><label for="kern">字距调整范围:</label>
    <span class="field" style="width:69px;height:26px;background:none;border-color:#b4bec4"><input id="kern" disabled><span class="steps" style="opacity:.3;filter:grayscale(1)"><button type="button" disabled aria-label="加"><svg width="8" height="6"><use href="#tu"/></svg></button><button type="button" disabled aria-label="减"><svg width="8" height="6"><use href="#td"/></svg></button></span></span></div>
   <button type="button" class="roll d-flex align-items-center justify-content-between" style="margin-top:2px"><span>字符效果</span><i><svg width="8" height="9"><path d="M1 1l3 3 3-3M1 5l3 3 3-3" fill="none" stroke="#222" stroke-width="1.500"/></svg></i></button>
   <button type="button" class="roll d-flex align-items-center justify-content-between"><span>字符位移</span><i><svg width="8" height="9"><path d="M1 1l3 3 3-3M1 5l3 3 3-3" fill="none" stroke="#222" stroke-width="1.500"/></svg></i></button>
   <div class="d-flex align-items-center justify-content-between mt-1 pe-1"><label for="script">脚本:</label><select id="script" class="combo" style="width:98px;height:21px"><option>全部语言</option></select></div>
  </form>
 </aside>

 <div class="tab-col flex-shrink-0 mt-3">
  <button class="side-tab" style="height:82px"><svg width="15" height="16"><use href="#s-tree"/></svg><span>对象管理器</span></button>
  <button class="side-tab" style="height:50px"><svg width="15" height="16"><use href="#s-turn"/></svg><span>变换</span></button>
  <button class="side-tab" style="height:70px"><svg width="15" height="16"><use href="#s-prop"/></svg><span>对象属性</span></button>
  <button class="side-tab" style="height:80px"><svg width="15" height="14"><use href="#s-para"/></svg><span>段落格式化</span></button>
  <button class="side-tab active" style="height:103px"><svg width="15" height="16"><use href="#s-char"/></svg><span>字符格式化</span><svg class="mt-1" width="8" height="8" style="color:#999"><use href="#x"/></svg></button>
 </div>

 <aside class="palette flex-shrink-0 d-flex flex-column align-items-center">
  <span class="grip flat" style="width:12px"></span>
  <button class="plain-btn my-1" style="width:13px;height:13px;border:1px solid #aaa;border-radius:50%;background:#fff" aria-label="调色板菜单"><svg width="6" height="6"><path d="M1 0l5 3-5 3z"/></svg></button>
  <button class="plain-btn dim w-100" style="height:14px;background:#fff" aria-label="向上"><svg width="9" height="7"><use href="#up"/></svg></button>
  <div id="swatches" class="swatches d-flex flex-column"></div>
  <button class="plain-btn scroll-btn w-100" style="height:14px;margin-top:20px" aria-label="向下"><svg width="9" height="7"><use href="#down"/></svg></button>
  <button class="plain-btn mt-1" aria-label="展开"><svg width="8" height="10"><path d="M8 0L3 5l5 5zM0 0h2v10H0z"/></svg></button>
 </aside>
</main>

<footer class="status flex-shrink-0 d-flex align-items-end">
 <span class="coords text-nowrap ps-1 pb-1 flex-shrink-0">( 292.574, 119.576 )</span>
 <span class="hint text-nowrap pb-1">接着单击可进行拖动或缩放；再单击可旋转或倾斜；双击工具，可选择所有对象；按住 Shift 键单击可选择多个对象；按住 Alt 键单...</span>
 <div>
  <div class="d-flex"><svg width="17" height="17"><use href="#t-fill"/></svg><svg width="18" height="18"><use href="#none"/></svg></div>
  <div class="d-flex pb-1" style="margin-top:2px"><svg width="17" height="16"><use href="#t-pen"/></svg><svg width="18" height="16"><rect width="18" height="16" fill="#24201a"/></svg></div>
 </div>
</footer>
<div class="taskbar flex-shrink-0"></div>

<div class="clip">
 <div class="ball">56</div>
 <div class="ime d-flex align-items-center">
  <svg class="sogou" width="28" height="28" viewBox="0 0 28 28"><path d="M2 5L23 1l4 21-20 5z" fill="#f05a28"/><path d="M20 8q-4-3-8-1t-1 5l6 2q4 3 0 5t-9 0" fill="none" stroke="#fff" stroke-width="3.500"/></svg>
  <svg width="147" height="16" viewBox="0 0 147 16"><text x="1" y="13" font-family="Noto Sans CJK SC, sans-serif" font-size="14" font-weight="bold" fill="#1f6fb5">中</text><g fill="#1f6fb5"><path d="M33 2a7 7 0 1 1-8 10q8 0 8-10z"/><path d="M52 9h3v3l-3 3v-2l1-1h-1z"/><path d="M66 3h15v11H66zm1.500 1.500v8h12v-8z" fill-rule="evenodd"/><path d="M111 3l3-2q2 2 4 0l3 2 2 3-3 2v6h-8V8l-3-2z"/><path d="M131 13l6-6q-1-5 4-5l-2 3 2 2 3-2q0 5-5 5l-6 5z"/></g><path d="M69 6h10M69 8h10M70 11h8" stroke="#1f6fb5" stroke-dasharray="1 1"/><circle cx="48" cy="6" r="2" fill="none" stroke="#1f6fb5"/><g fill="#a9b4ce"><circle cx="94" cy="4" r="3"/><path d="M88 9h12v3h-2v3h-8v-3h-2z"/></g></svg>
 </div>
 <div class="wm">
  <div class="d-flex align-items-center justify-content-between">
   <span class="wm-name">Bai</span>
   <svg width="48" height="60" viewBox="0 0 48 60" style="margin:-14px 0 -4px;overflow:visible"><g fill="#fff" stroke="#b5b2a6" stroke-width=".7"><ellipse cx="6" cy="24" rx="6" ry="7"/><ellipse cx="17" cy="9" rx="6" ry="8"/><ellipse cx="30" cy="9" rx="6" ry="8"/><ellipse cx="42" cy="22" rx="6" ry="7"/><path d="M24 20q6 0 9 7 2 4 7 8 5 6 1 12-3 5-10 3-7-2-14 0-8 2-11-3-4-6 1-12 5-4 8-8 3-7 9-7z"/></g><text x="24" y="46" text-anchor="middle" font-family="Liberation Sans, sans-serif" font-size="20" font-weight="bold" fill="#c4c1b3">du</text></svg>
   <span class="wm-cn">经验</span>
  </div>
  <div class="wm-url">jingyan.baidu.com</div>
 </div>
</div>

<script src="https://cdn.jsdelivr.net/npm/bootstrap@5.3.0/dist/js/bootstrap.bundle.min.js"></script>
<script>
// Toolbox: symbol id, label, and whether the tool has a flyout
const tools = [['pick','挑选',0],['shape','形状',1],['crop','裁剪',1],['zoom','缩放',1],['free','手绘',1],['smart','智能填充',1],['rect','矩形',1],['ell','椭圆形',1],['poly','多边形',1],['basic','基本形状',1],['text','文本',0],['table','表格',0],['blend','调和',1],['drop','滴管',1],['pen','轮廓',1],['fill','填充',1],['ifill','交互式填充',1]];
document.getElementById('tools').innerHTML = tools.map(([id, label, fly]) =>
  `<button class="plain-btn position-relative ${fly ? 'fly' : ''} ${id === 'pick' ? 'toggled' : ''}" aria-label="${label}">` +
  (id === 'text' ? '<span class="tool-glyph">字</span>' : `<svg width="16" height="16"><use href="#t-${id}"/></svg>`) + '</button>').join('');

const colours = ['','#1f1a17','#3b3733','#4b4844','#595753','#696765','#7a7978','#8b8b8b','#9b9b9b','#acacac','#c0c0c0','#dcdcdc','#ffffff','#35096f','#1a86d0','#2fa24a','#f3e81a','#e63c04','#f02f7c','#a04a78','#f08205','#fb9d98','#736656','#b9addb','#8f7fba','#6077b8','#745f9e'];
// One grey fewer than the full ramp, so that 26 wells share the column
colours.splice(9, 1);
document.getElementById('swatches').innerHTML = colours.map(c => c
  ? `<span style="background:${c}"></span>`
  : '<svg width="18" height="17"><use href="#none"/></svg>').join('');

// Rulers: 50 mm is drawn as 87.3 px; the zero points follow the sheet's lower left corner
const step = 87.3 / 10;
function ruler(el, zero, length, vertical, marker, unitAt) {
  let out = '';
  const base = vertical ? 20 : 19;
  const first = Math.ceil(-zero / step), last = Math.floor((length - zero) / step);
  for (let i = first; i <= last; i++) {
    const p = Math.round(zero + i * step), major = i % 10 === 0, len = major ? 5 : (i % 5 === 0 ? 4 : 2);
    out += vertical ? `<path d="M${base - len} ${p}.5H${base}" stroke="#222"/>` : `<path d="M${p}.5 ${base - len}V${base}" stroke="#222"/>`;
    if (major && Math.abs(p - unitAt) > 24) {
      const v = Math.abs(i * 5);
      out += vertical ? `<text class="ruler-text" text-anchor="middle" transform="translate(13 ${p}) rotate(-90)">${v}</text>`
                      : `<text class="ruler-text" text-anchor="middle" x="${p}" y="11">${v}</text>`;
    }
  }
  out += vertical ? `<path d="M3 ${marker}.5H20" stroke="#222" stroke-dasharray="3 3"/><text class="ruler-text" text-anchor="middle" transform="translate(13 ${unitAt}) rotate(-90)">毫米</text>`
                  : `<path d="M${marker}.5 2V19" stroke="#222" stroke-dasharray="3 3"/><text class="ruler-text" text-anchor="middle" x="${unitAt}" y="11">毫米</text>`;
  el.innerHTML = out;
}
function drawRulers() {
  const h = document.getElementById('rulerH'), v = document.getElementById('rulerV');
  const w = h.getBoundingClientRect().width, t = v.getBoundingClientRect().height;
  ruler(h, 95, w, false, 661, w - 13);
  ruler(v, 430, t, true, 280, t - 14);
}
drawRulers();
addEventListener('resize', drawRulers);
</script>
</body>
</html>
